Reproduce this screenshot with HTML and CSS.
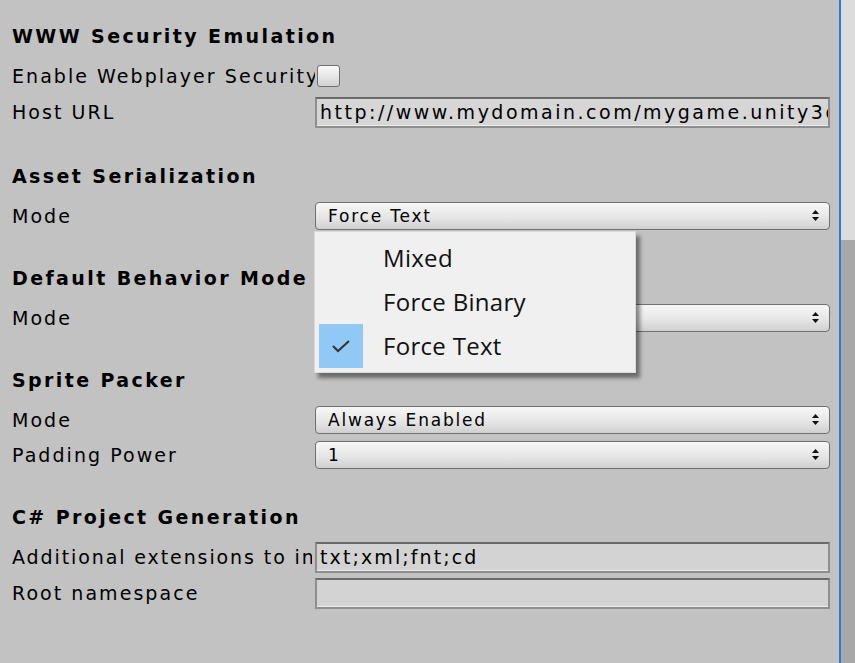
FILE: index.html
```html
<!DOCTYPE html>
<html>
<head>
<meta charset="utf-8">
<link rel="stylesheet" href="styles.css">
</head>
<body>
<div class="window">
  <div class="inspector">
    <section class="section first">
      <h2 class="heading">WWW Security Emulation</h2>
      <div class="row tall">
        <div class="label">Enable Webplayer Security</div>
        <div class="control"><span class="checkbox"></span></div>
      </div>
      <div class="row tall">
        <div class="label">Host URL</div>
        <div class="control"><div class="field url">http://www.mydomain.com/mygame.unity3d</div></div>
      </div>
    </section>

    <section class="section">
      <h2 class="heading">Asset Serialization</h2>
      <div class="row">
        <div class="label">Mode</div>
        <div class="control">
          <div class="popup"><span class="popup-text">Force Text</span>
            <svg class="arrows" width="7" height="13" viewBox="0 0 7 13"><polygon points="0,5 3.5,1 7,5"/><polygon points="0,8 3.5,12 7,8"/></svg>
          </div>
        </div>
      </div>
    </section>

    <section class="section">
      <h2 class="heading">Default Behavior Mode</h2>
      <div class="row">
        <div class="label">Mode</div>
        <div class="control">
          <div class="popup"><span class="popup-text">3D</span>
            <svg class="arrows" width="7" height="13" viewBox="0 0 7 13"><polygon points="0,5 3.5,1 7,5"/><polygon points="0,8 3.5,12 7,8"/></svg>
          </div>
        </div>
      </div>
    </section>

    <section class="section">
      <h2 class="heading">Sprite Packer</h2>
      <div class="row">
        <div class="label">Mode</div>
        <div class="control">
          <div class="popup"><span class="popup-text">Always Enabled</span>
            <svg class="arrows" width="7" height="13" viewBox="0 0 7 13"><polygon points="0,5 3.5,1 7,5"/><polygon points="0,8 3.5,12 7,8"/></svg>
          </div>
        </div>
      </div>
      <div class="row">
        <div class="label">Padding Power</div>
        <div class="control">
          <div class="popup"><span class="popup-text">1</span>
            <svg class="arrows" width="7" height="13" viewBox="0 0 7 13"><polygon points="0,5 3.5,1 7,5"/><polygon points="0,8 3.5,12 7,8"/></svg>
          </div>
        </div>
      </div>
    </section>

    <section class="section">
      <h2 class="heading">C# Project Generation</h2>
      <div class="row tall">
        <div class="label narrow">Additional extensions to include</div>
        <div class="control"><div class="field ext">txt;xml;fnt;cd</div></div>
      </div>
      <div class="row tall">
        <div class="label">Root namespace</div>
        <div class="control"><div class="field"></div></div>
      </div>
    </section>

    <div class="menu">
      <div class="menu-item"><span class="check"></span><span class="menu-text">Mixed</span></div>
      <div class="menu-item"><span class="check"></span><span class="menu-text">Force Binary</span></div>
      <div class="menu-item selected"><span class="check">
        <svg width="20" height="14" viewBox="0 0 20 14"><polyline points="2,7 7,12 18,2" fill="none" stroke="#333" stroke-width="2"/></svg>
      </span><span class="menu-text">Force Text</span></div>
    </div>
  </div>
  <div class="edge"></div>
  <div class="scroll"><div class="thumb"></div></div>
</div>
</body>
</html>
```

FILE: styles.css
```css
html, body {
  margin: 0;
  padding: 0;
  background: #c2c2c2;
}

.window {
  display: flex;
  width: 855px;
  height: 663px;
  overflow: hidden;
}

.inspector {
  position: relative;
  width: 839px;
  flex: none;
  padding-top: 20px;
  box-sizing: border-box;
  font-family: "DejaVu Sans", Verdana, sans-serif;
  color: #000;
}

.edge {
  width: 2px;
  flex: none;
  background: #2b7cd3;
}

.scroll {
  flex: 1;
  background: #a8a8a8;
  display: flex;
  flex-direction: column;
}

.thumb {
  height: 240px;
  background: #dcdcdc;
}

.section {
  margin-bottom: 29px;
}

.section.first {
  margin-bottom: 30px;
}

.heading {
  margin: 0 0 6px 12px;
  height: 32px;
  line-height: 32px;
  font-size: 19px;
  font-weight: bold;
  letter-spacing: 2.4px;
}

.row {
  display: flex;
  align-items: center;
  height: 35px;
}

.row.tall {
  height: 36px;
}

.label {
  width: 303px;
  margin-left: 12px;
  flex: none;
  white-space: nowrap;
  overflow: hidden;
  font-size: 19px;
  letter-spacing: 2.05px;
}

.label.narrow {
  width: 300px;
  margin-right: 3px;
  letter-spacing: 1.9px;
}

.control {
  width: 515px;
  flex: none;
  display: flex;
  align-items: center;
}

.checkbox {
  display: block;
  width: 21px;
  height: 20px;
  margin-left: 2px;
  border: 1px solid #6f6f6f;
  border-radius: 3px;
  background: linear-gradient(#fafafa, #d2d2d2);
}

.field {
  width: 100%;
  height: 31px;
  box-sizing: border-box;
  border: 2px solid #8e8e8e;
  border-top-color: #6a6a6a;
  background: #d3d3d3;
  box-shadow: inset 0 -1px 0 #ececec;
  padding: 0 0 0 3px;
  font-size: 19px;
  line-height: 26px;
  white-space: nowrap;
  overflow: hidden;
}

.field.url {
  letter-spacing: 2.5px;
  background: #d6d6d6;
}

.field.ext {
  letter-spacing: 2.1px;
}

.popup {
  width: 100%;
  height: 28px;
  box-sizing: border-box;
  border: 1px solid #707070;
  border-radius: 4px;
  background: linear-gradient(#f7f7f7, #e6e6e6 55%, #d0d0d0);
  display: flex;
  align-items: center;
  justify-content: space-between;
  padding: 0 10px 0 12px;
}

.popup-text {
  font-size: 17px;
  letter-spacing: 1.8px;
}

.arrows {
  fill: #111;
  display: block;
}

.menu {
  position: absolute;
  left: 314px;
  top: 231px;
  width: 322px;
  padding: 4px 0 4px 4px;
  box-sizing: border-box;
  background: #f0f0f0;
  border: 1px solid #dadada;
  box-shadow: 4px 5px 4px rgba(0, 0, 0, 0.45);
  font-family: "Open Sans", "Noto Sans", sans-serif;
}

.menu-item {
  display: flex;
  align-items: center;
  height: 44px;
}

.check {
  width: 44px;
  height: 44px;
  flex: none;
  display: flex;
  align-items: center;
  justify-content: center;
  margin-right: 20px;
}

.selected .check {
  background: #90c8f6;
}

.menu-text {
  font-size: 24px;
  letter-spacing: 0.3px;
  color: #111;
  margin-top: -2px;
}
```
